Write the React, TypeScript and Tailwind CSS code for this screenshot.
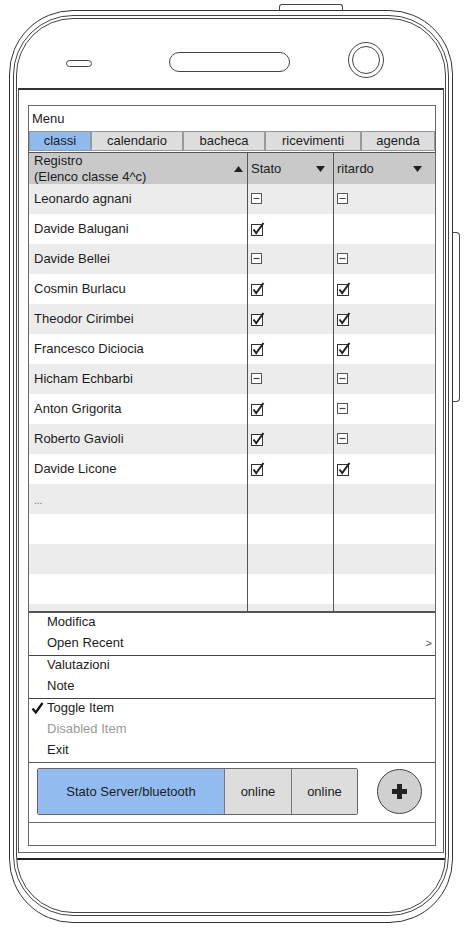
import React from "react";

type Mark = "check" | "dash" | null;

type Row = { name: string; stato: Mark; ritardo: Mark };

const rows: Row[] = [
  { name: "Leonardo agnani", stato: "dash", ritardo: "dash" },
  { name: "Davide Balugani", stato: "check", ritardo: null },
  { name: "Davide Bellei", stato: "dash", ritardo: "dash" },
  { name: "Cosmin Burlacu", stato: "check", ritardo: "check" },
  { name: "Theodor Cirimbei", stato: "check", ritardo: "check" },
  { name: "Francesco Diciocia", stato: "check", ritardo: "check" },
  { name: "Hicham Echbarbi", stato: "dash", ritardo: "dash" },
  { name: "Anton Grigorita", stato: "check", ritardo: "dash" },
  { name: "Roberto Gavioli", stato: "check", ritardo: "dash" },
  { name: "Davide Licone", stato: "check", ritardo: "check" },
];

const tabs = [
  { label: "classi", w: "w-[62px]", active: true },
  { label: "calendario", w: "w-[92px]" },
  { label: "bacheca", w: "w-[82px]" },
  { label: "ricevimenti", w: "w-[96px]" },
  { label: "agenda", w: "w-[74px]" },
];

const Box: React.FC<{ mark: Mark }> = ({ mark }) => {
  if (!mark) return null;
  if (mark === "dash") {
    return (
      <svg width="12" height="12" viewBox="0 0 12 12" className="block">
        <rect x="0.5" y="0.5" width="10" height="10" fill="white" stroke="#555" />
        <path d="M2.5 5.5 H8.5" stroke="#444" strokeWidth="1.2" />
      </svg>
    );
  }
  return (
    <svg width="14" height="14" viewBox="0 0 14 14" className="block">
      <rect x="0.5" y="2.5" width="11" height="11" fill="white" stroke="#333" />
      <path d="M2.5 7.5 L5.2 11 L12.5 1" fill="none" stroke="#222" strokeWidth="2" />
    </svg>
  );
};

const Tri: React.FC<{ up?: boolean }> = ({ up }) => (
  <svg width="9" height="6" viewBox="0 0 9 6" className="block">
    <path d={up ? "M0 6 L4.5 0 L9 6 Z" : "M0 0 L9 0 L4.5 6 Z"} fill="#222" />
  </svg>
);

const MenuItem: React.FC<{ label: string; checked?: boolean; disabled?: boolean; sub?: boolean }> = ({
  label,
  checked,
  disabled,
  sub,
}) => (
  <div className={"h-[21px] pb-[3px] flex items-center " + (disabled ? "text-[#999]" : "text-[#1c1c1c]")}>
    <div className="w-[16px] flex justify-start">
      {checked && (
        <svg width="13" height="12" viewBox="0 0 13 12">
          <path d="M1.5 6.5 L4.8 10.5 L11.5 1" fill="none" stroke="#111" strokeWidth="2.2" />
        </svg>
      )}
    </div>
    <span className="flex-1">{label}</span>
    {sub && <span className="pr-[3px] text-[11px] text-[#555]">&gt;</span>}
  </div>
);

export default function App() {
  return (
    <div className="relative w-[464px] h-[931px] bg-white overflow-hidden font-['Liberation_Sans',Arial,sans-serif] text-[13px] text-[#1c1c1c]">
      {/* phone buttons */}
      <div className="absolute left-[279px] top-[4px] w-[64px] h-[7px] border border-b-0 border-[#444] rounded-t-[3px]" />
      <div className="absolute left-[452px] top-[232px] w-[8px] h-[170px] border border-l-0 border-[#444] rounded-r-[4px]" />

      <div className="ml-[9px] mt-[10px] w-[444px] h-[913px] border border-[#333] rounded-[64px] pt-[4px] px-[3px] pb-[6px]">
        <div className="h-full border border-[#444] rounded-[60px] p-[2px]">
          <div className="h-full border border-[#444] rounded-[57px] overflow-hidden flex flex-col">
            {/* top area */}
            <div className="h-[69px] flex items-start shrink-0">
              <div className="ml-[49px] mt-[41px] w-[26px] h-[7px] border border-[#444] rounded-full" />
              <div className="ml-[77px] mt-[33px] w-[121px] h-[20px] border border-[#444] rounded-full" />
              <div className="ml-[58px] mt-[23px] w-[36px] h-[36px] border border-[#444] rounded-full flex items-center justify-center">
                <div className="w-[28px] h-[28px] border border-[#444] rounded-full" />
              </div>
            </div>

            {/* screen */}
            <div className="mx-[1px] border-x border-t-2 border-b border-x-[#555] border-t-[#333] border-b-[#666] shrink-0">
              <div className="mt-[15px] ml-[9px] mr-[7px] mb-[6px] h-[741px] border border-[#666] flex flex-col bg-white">
                <div className="h-[25px] pl-[3px] flex items-end pb-[3px]">Menu</div>

                <div className="flex h-[20px]">
                  {tabs.map((t) => (
                    <div
                      key={t.label}
                      className={
                        t.w +
                        " h-full border border-[#999] flex items-center justify-center " +
                        (t.active ? "bg-[#8fb9ef]" : "bg-[#dddddd]")
                      }
                    >
                      {t.label}
                    </div>
                  ))}
                </div>
                <div className="h-[1px]" />

                {/* table */}
                <div className="grid grid-cols-[218px_86px_1fr] h-[32px] bg-[#c9c9c9] border-t border-[#555]">
                  <div className="pl-[5px] pr-[4px] flex items-center">
                    <div className="flex-1 leading-[16px]">
                      Registro
                      <br />
                      (Elenco classe 4^c)
                    </div>
                    <Tri up />
                  </div>
                  <div className="border-l border-[#555] pl-[3px] pr-[8px] flex items-center">
                    <span className="flex-1">Stato</span>
                    <Tri />
                  </div>
                  <div className="border-l border-[#555] pl-[3px] pr-[13px] flex items-center">
                    <span className="flex-1">ritardo</span>
                    <Tri />
                  </div>
                </div>

                <div className="h-[429px] shrink-0 overflow-hidden border-b-2 border-[#555]">
                  {Array.from({ length: 15 }).map((_, i) => {
                    const r = rows[i];
                    return (
                      <div
                        key={i}
                        className={
                          "grid grid-cols-[218px_86px_1fr] h-[30px] " + (i % 2 === 0 ? "bg-[#ececec]" : "bg-white")
                        }
                      >
                        <div className="pl-[5px] flex items-center">
                          {r ? r.name : i === 10 ? <span className="text-[10px] text-[#666] pt-[3px]">...</span> : null}
                        </div>
                        <div className="border-l border-[#555] pl-[3px] flex items-center">
                          {r && <Box mark={r.stato} />}
                        </div>
                        <div className="border-l border-[#555] pl-[3px] flex items-center">
                          {r && <Box mark={r.ritardo} />}
                        </div>
                      </div>
                    );
                  })}
                </div>

                {/* menu */}
                <div className="pl-[2px]">
                  <MenuItem label="Modifica" />
                  <MenuItem label="Open Recent" sub />
                </div>
                <div className="h-px bg-[#444]" />
                <div className="pl-[2px]">
                  <MenuItem label="Valutazioni" />
                  <MenuItem label="Note" />
                </div>
                <div className="h-px bg-[#444]" />
                <div className="pl-[2px]">
                  <MenuItem label="Toggle Item" checked />
                  <MenuItem label="Disabled Item" disabled />
                  <MenuItem label="Exit" />
                </div>
                <div className="h-px bg-[#555]" />

                {/* status bar */}
                <div className="h-[59px] shrink-0 flex items-start pt-[5px] pl-[8px]">
                  <div className="flex h-[47px] w-[321px] border border-[#666] rounded-[2px] overflow-hidden">
                    <div className="w-[186px] bg-[#92bbf0] flex items-center justify-center">Stato Server/bluetooth</div>
                    <div className="w-[67px] bg-[#dddddd] border-l border-[#777] flex items-center justify-center">
                      online
                    </div>
                    <div className="flex-1 bg-[#dddddd] border-l border-[#777] flex items-center justify-center">
                      online
                    </div>
                  </div>
                  <div className="ml-[19px] mt-[1px] w-[45px] h-[45px] rounded-full border border-[#444] bg-[#d0d0d0] flex items-center justify-center">
                    <svg width="17" height="17" viewBox="0 0 17 17">
                      <path d="M8.5 1 V16 M1 8.5 H16" stroke="#222" strokeWidth="5" />
                    </svg>
                  </div>
                </div>
                <div className="h-px bg-[#666]" />
                <div className="flex-1" />
              </div>
            </div>
            <div className="h-[5px] shrink-0" />
            <div className="h-[2px] bg-[#222] shrink-0" />
          </div>
        </div>
      </div>
    </div>
  );
}
